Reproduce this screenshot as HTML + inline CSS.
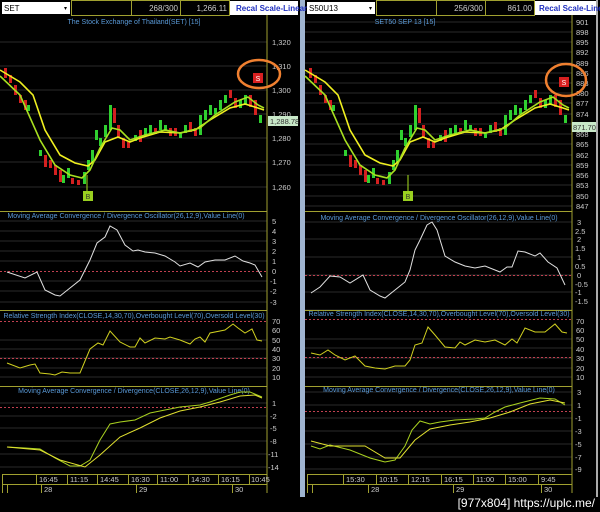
<!DOCTYPE html>
<html><head><meta charset="utf-8"><style>
html,body{margin:0;padding:0;background:#000;width:600px;height:512px;overflow:hidden}
svg{display:block}
text{font-family:"Liberation Sans",sans-serif}
</style></head><body>
<svg width="600" height="512" viewBox="0 0 600 512" xmlns="http://www.w3.org/2000/svg">
<rect width="600" height="512" fill="#000"/>
<defs>
<g id="candles">
<g fill="#d42020">
<rect x="4" y="68" width="3" height="10"/><rect x="9" y="75" width="3" height="8"/><rect x="14" y="85" width="3" height="10"/><rect x="19" y="95" width="3" height="8"/><rect x="24" y="100" width="3" height="10"/>
<rect x="44" y="155" width="3" height="12"/><rect x="49" y="160" width="3" height="8"/><rect x="54" y="165" width="3" height="10"/><rect x="59" y="170" width="3" height="12"/><rect x="71" y="178" width="3" height="6"/><rect x="77" y="180" width="3" height="5"/>
<rect x="113" y="108" width="3" height="15"/><rect x="117" y="125" width="3" height="12"/><rect x="122" y="138" width="3" height="10"/><rect x="127" y="142" width="3" height="6"/><rect x="139" y="130" width="3" height="12"/><rect x="154" y="128" width="3" height="6"/><rect x="169" y="128" width="3" height="8"/><rect x="174" y="128" width="3" height="8"/><rect x="189" y="122" width="3" height="10"/><rect x="194" y="128" width="3" height="8"/><rect x="229" y="90" width="3" height="8"/><rect x="234" y="98" width="3" height="10"/><rect x="249" y="95" width="3" height="12"/><rect x="254" y="100" width="3" height="15"/>
</g>
<g fill="#30d030">
<rect x="27" y="105" width="3" height="6"/><rect x="39" y="150" width="3" height="6"/><rect x="62" y="175" width="3" height="8"/><rect x="67" y="168" width="3" height="10"/><rect x="83" y="172" width="3" height="12"/><rect x="87" y="160" width="3" height="10"/><rect x="91" y="150" width="3" height="12"/><rect x="95" y="130" width="3" height="10"/><rect x="99" y="138" width="3" height="8"/><rect x="104" y="125" width="3" height="12"/><rect x="109" y="105" width="3" height="25"/>
<rect x="134" y="135" width="3" height="6"/><rect x="144" y="128" width="3" height="8"/><rect x="149" y="125" width="3" height="8"/><rect x="159" y="120" width="3" height="10"/><rect x="164" y="125" width="3" height="6"/><rect x="179" y="132" width="3" height="6"/><rect x="184" y="125" width="3" height="8"/><rect x="199" y="115" width="3" height="20"/><rect x="204" y="110" width="3" height="10"/><rect x="209" y="105" width="3" height="10"/><rect x="214" y="108" width="3" height="6"/><rect x="219" y="100" width="3" height="10"/><rect x="224" y="95" width="3" height="8"/><rect x="239" y="100" width="3" height="8"/><rect x="244" y="95" width="3" height="10"/><rect x="259" y="115" width="3" height="8"/>
</g>
<polyline fill="none" stroke="#f0f020" stroke-width="1.6" points="0,70 20,82 33,95 45,130 60,155 75,163 88,166 95,160 105,142 118,137 130,142 140,138 160,132 180,133 195,130 210,120 230,108 245,104 258,108 264,110"/>
<polyline fill="none" stroke="#a8e020" stroke-width="1.6" points="0,76 20,95 40,140 55,165 70,175 82,178 90,170 100,148 112,128 120,130 130,140 145,135 165,130 180,133 200,128 215,115 235,102 248,97 258,105 264,108"/>
</g>
</defs>

<rect x="300" y="0" width="5" height="497" fill="#9fb4d0"/>
<rect x="596" y="0" width="2" height="497" fill="#aaa"/>

<g font-size="8">
<rect x="2" y="2" width="68" height="12" fill="#fff"/><text x="4" y="11" fill="#000">SET</text><text x="64" y="10" fill="#000" font-size="6">▾</text>
<rect x="71.5" y="0.5" width="60" height="15" fill="none" stroke="#a0a030"/><rect x="131.5" y="0.5" width="49" height="15" fill="none" stroke="#a0a030"/><rect x="180.5" y="0.5" width="49" height="15" fill="none" stroke="#a0a030"/>
<text x="178" y="11" fill="#ccc" text-anchor="end">268/300</text><text x="227" y="11" fill="#ccc" text-anchor="end">1,266.11</text>
<rect x="230" y="1" width="68" height="14" fill="#fff"/><text x="236" y="11" fill="#2030c0" font-weight="bold">Recal Scale-Linear</text>
<rect x="307" y="2" width="68" height="12" fill="#fff"/><text x="309" y="11" fill="#000">S50U13</text><text x="369" y="10" fill="#000" font-size="6">▾</text>
<rect x="376.5" y="0.5" width="60" height="15" fill="none" stroke="#a0a030"/><rect x="436.5" y="0.5" width="49" height="15" fill="none" stroke="#a0a030"/><rect x="485.5" y="0.5" width="49" height="15" fill="none" stroke="#a0a030"/>
<text x="483" y="11" fill="#ccc" text-anchor="end">256/300</text><text x="532" y="11" fill="#ccc" text-anchor="end">861.00</text>
<rect x="535" y="1" width="61" height="14" fill="#fff"/><text x="539" y="11" fill="#2030c0" font-weight="bold">Recal Scale-Linea</text>
</g>

<g stroke="#2a2a2a" stroke-width="1">
<path d="M0 42H267M0 66H267M0 90H267M0 114H267M0 138H267M0 162H267M0 187H267"/>
<path d="M0 221H267M0 231H267M0 241H267M0 251H267M0 261H267M0 281H267M0 291H267M0 302H267"/>
<path d="M0 340H267M0 349H267M0 358H267M0 368H267M0 377H267"/>
<path d="M0 403H267M0 416H267M0 428H267M0 441H267M0 454H267M0 467H267"/>
<path d="M305 22H572M305 32H572M305 42H572M305 52H572M305 63H572M305 73H572M305 83H572M305 93H572M305 103H572M305 114H572M305 124H572M305 134H572M305 144H572M305 155H572M305 165H572M305 175H572M305 185H572M305 196H572M305 206H572"/>
<path d="M305 222H572M305 239H572M305 257H572M305 275H572M305 292H572M305 310H572"/>
<path d="M305 339H572M305 348H572M305 358H572M305 368H572M305 377H572"/>
<path d="M305 392H572M305 405H572M305 418H572M305 431H572M305 444H572M305 457H572M305 469H572"/>
</g>

<g stroke="#a0a030" stroke-width="1" fill="none">
<path d="M267 15V493M0 211.5H267M0 310.5H267M0 386.5H267M2 474.5H267M2 484.5H267"/>
<path d="M572 15V493M305 211.5H572M305 310.5H572M305 386.5H572M307 474.5H572M307 484.5H572"/>
<path d="M2.5 474V493M7.5 484V493M36.5 474V484M67.5 474V484M97.5 474V484M128.5 474V484M157.5 474V484M188.5 474V484M218.5 474V484M249.5 474V484M41.5 484V493M136.5 484V493M232.5 484V493"/>
<path d="M307.5 474V493M312.5 484V493M343.5 474V484M376.5 474V484M408.5 474V484M441.5 474V484M473.5 474V484M505.5 474V484M538.5 474V484M368.5 484V493M453.5 484V493M541.5 484V493"/>
</g>
<g fill="#ccc" font-size="7.5">
<text x="272" y="45">1,320</text><text x="272" y="69">1,310</text><text x="272" y="93">1,300</text><text x="272" y="117">1,290</text><text x="272" y="141">1,280</text><text x="272" y="165">1,270</text><text x="272" y="190">1,260</text>
<text x="272" y="224">5</text><text x="272" y="234">4</text><text x="272" y="244">3</text><text x="272" y="254">2</text><text x="272" y="264">1</text><text x="272" y="274">0</text><text x="270" y="284">-1</text><text x="270" y="294">-2</text><text x="270" y="305">-3</text>
<text x="272" y="324">70</text><text x="272" y="333">60</text><text x="272" y="343">50</text><text x="272" y="352">40</text><text x="272" y="361">30</text><text x="272" y="371">20</text><text x="272" y="380">10</text>
<text x="272" y="406">1</text><text x="270" y="419">-2</text><text x="270" y="431">-5</text><text x="270" y="444">-8</text><text x="268" y="457">-11</text><text x="268" y="470">-14</text>
<text x="576" y="25">901</text><text x="576" y="35">898</text><text x="576" y="45">895</text><text x="576" y="55">892</text><text x="576" y="66">889</text><text x="576" y="76">886</text><text x="576" y="86">883</text><text x="576" y="96">880</text><text x="576" y="106">877</text><text x="576" y="117">874</text><text x="576" y="137">868</text><text x="576" y="147">865</text><text x="576" y="158">862</text><text x="576" y="168">859</text><text x="576" y="178">856</text><text x="576" y="188">853</text><text x="576" y="199">850</text><text x="576" y="209">847</text>
<text x="577" y="225">3</text><text x="575" y="234">2.5</text><text x="577" y="242">2</text><text x="575" y="251">1.5</text><text x="577" y="260">1</text><text x="575" y="269">0.5</text><text x="577" y="278">0</text><text x="575" y="287">-0.5</text><text x="575" y="295">-1</text><text x="575" y="304">-1.5</text>
<text x="576" y="324">70</text><text x="576" y="333">60</text><text x="576" y="342">50</text><text x="576" y="352">40</text><text x="576" y="361">30</text><text x="576" y="371">20</text><text x="576" y="380">10</text>
<text x="577" y="395">3</text><text x="577" y="408">1</text><text x="575" y="421">-1</text><text x="575" y="434">-3</text><text x="575" y="447">-5</text><text x="575" y="460">-7</text><text x="575" y="472">-9</text>
</g>
<g fill="#ccc" font-size="7.5">
<text x="39" y="482">16:45</text><text x="70" y="482">11:15</text><text x="100" y="482">14:45</text><text x="131" y="482">16:30</text><text x="160" y="482">11:00</text><text x="191" y="482">14:30</text><text x="221" y="482">16:15</text><text x="251" y="482">10:45</text>
<text x="44" y="492">28</text><text x="139" y="492">29</text><text x="235" y="492">30</text>
<text x="346" y="482">15:30</text><text x="379" y="482">10:15</text><text x="411" y="482">12:15</text><text x="444" y="482">16:15</text><text x="476" y="482">11:00</text><text x="508" y="482">15:00</text><text x="541" y="482">9:45</text>
<text x="371" y="492">28</text><text x="456" y="492">29</text><text x="544" y="492">30</text>
</g>

<g fill="#5a9ad8" font-size="7" text-anchor="middle">
<text x="134" y="24">The Stock Exchange of Thailand(SET) [15]</text>
<text x="126" y="218">Moving Average Convergence / Divergence Oscillator(26,12,9),Value Line(0)</text>
<text x="134" y="318">Relative Strength Index(CLOSE,14,30,70),Overbought Level(70),Oversold Level(30)</text>
<text x="134" y="393">Moving Average Convergence / Divergence(CLOSE,26,12,9),Value Line(0)</text>
<text x="405" y="24">SET50 SEP 13   [15]</text>
<text x="439" y="220">Moving Average Convergence / Divergence Oscillator(26,12,9),Value Line(0)</text>
<text x="439" y="316">Relative Strength Index(CLOSE,14,30,70),Overbought Level(70),Oversold Level(30)</text>
<text x="439" y="392">Moving Average Convergence / Divergence(CLOSE,26,12,9),Value Line(0)</text>
</g>

<g stroke="#c04050" stroke-dasharray="2,2" stroke-width="1">
<path d="M0 271.5H267M0 321.5H267M0 358.5H267M0 407.5H267"/>
<path d="M305 275.5H572M305 319.5H572M305 357.5H572M305 411.5H572"/>
</g>

<use href="#candles"/>
<use href="#candles" transform="translate(305,0)"/>
<path d="M87 175V192M408 175V192" stroke="#a8e020"/>
<rect x="83" y="191" width="10" height="10" fill="#9ad020"/><text x="88" y="199" font-size="7" fill="#333" text-anchor="middle">B</text>
<rect x="403" y="191" width="10" height="10" fill="#9ad020"/><text x="408" y="199" font-size="7" fill="#333" text-anchor="middle">B</text>
<rect x="253" y="73" width="10" height="10" fill="#d82020"/><text x="258" y="81" font-size="7" fill="#fff" text-anchor="middle">S</text>
<rect x="559" y="77" width="10" height="10" fill="#d82020"/><text x="564" y="85" font-size="7" fill="#fff" text-anchor="middle">S</text>
<ellipse cx="259" cy="74" rx="21" ry="14" fill="none" stroke="#f08030" stroke-width="2.5"/>
<ellipse cx="566" cy="80" rx="20" ry="16" fill="none" stroke="#f08030" stroke-width="2.5"/>
<rect x="268" y="116" width="30" height="10" fill="#c8e8c8"/><text x="270" y="124" font-size="7.5" fill="#333">1,288.78</text>
<rect x="572" y="122" width="24" height="10" fill="#c8e8c8"/><text x="573" y="130" font-size="7.5" fill="#333">871.70</text>

<g fill="none" stroke-width="1">
<polyline stroke="#e0e0e0" points="7,272 25,278 37,272 45,290 55,295 60,296 70,288 80,280 90,260 97,243 105,237 110,226 117,230 125,245 133,251 138,250 145,252 155,253 165,256 175,262 180,266 190,263 198,267 205,262 215,260 225,260 235,256 243,261 250,263 255,265 262,277"/>
<polyline stroke="#e0e0e0" points="311,293 320,287 330,276 340,277 350,283 363,275 370,290 380,296 385,298 395,290 405,282 410,270 415,250 420,240 427,225 432,222 437,230 445,256 455,262 465,266 475,268 485,266 495,270 500,272 507,267 512,267 518,251 525,252 535,256 540,253 548,262 557,268 565,285"/>
<polyline stroke="#d0d020" points="7,363 20,368 30,365 35,364 40,373 50,374 55,375 62,372 70,373 80,373 90,349 98,343 103,345 110,331 120,342 130,347 135,347 140,338 145,343 155,338 165,339 170,337 180,340 190,344 195,339 200,337 205,342 210,333 225,330 233,324 238,328 245,333 252,329 257,340 262,341"/>
<polyline stroke="#d0d020" points="311,353 320,355 328,350 335,355 345,360 355,356 365,366 375,368 385,369 395,366 405,366 410,360 415,345 422,343 428,327 435,335 445,347 455,348 460,342 465,345 475,340 485,342 495,340 505,345 512,339 517,343 525,328 535,332 545,332 555,324 562,332 567,333"/>
<polyline stroke="#a8d020" points="7,447 25,448 40,449 55,458 70,466 80,466 90,460 100,440 110,424 120,422 135,420 150,413 165,410 180,407 190,406 200,405 210,402 230,395 240,392 250,392 262,397"/>
<polyline stroke="#e0e030" points="7,447 40,450 60,460 85,467 100,455 120,437 140,428 160,418 180,411 200,407 220,402 240,396 255,395 262,398"/>
<polyline stroke="#a8d020" points="311,446 320,449 330,445 350,450 370,458 385,462 395,460 405,446 412,430 420,421 430,424 440,422 455,420 475,419 485,418 495,412 505,407 520,403 540,398 555,399 565,405"/>
<polyline stroke="#e0e030" points="311,441 330,446 365,446 385,458 400,458 415,440 430,429 450,425 470,422 490,418 510,412 530,404 550,400 565,403"/>
</g>

<rect x="0" y="497" width="600" height="15" fill="#000"/>
<text x="595" y="507" font-family="'DejaVu Sans Mono','Liberation Mono',monospace" font-size="12" fill="#fff" text-anchor="end">[977x804] https://uplc.me/</text>
</svg>
</body></html>
